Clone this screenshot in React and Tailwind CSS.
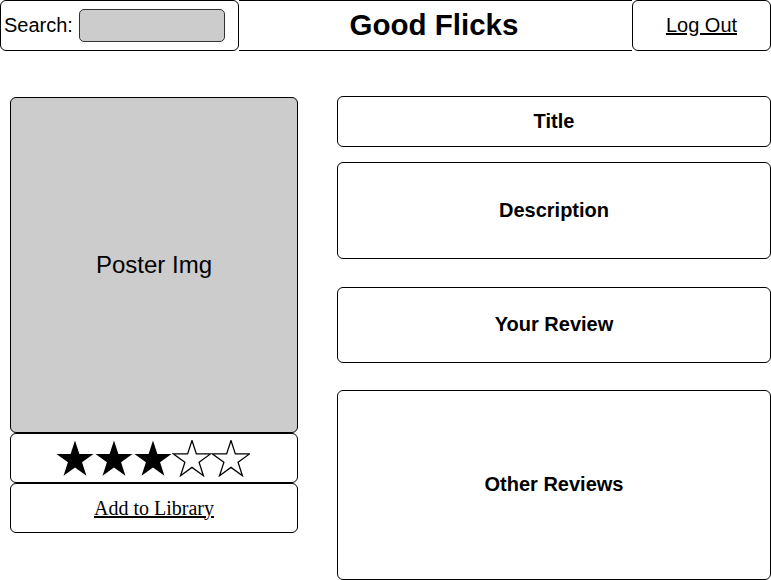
import React from 'react';

const STAR_POINTS =
  '20,0 24.49,13.82 39.02,13.82 27.27,22.36 31.76,36.18 20,27.64 8.24,36.18 12.73,22.36 0.98,13.82 15.51,13.82';

const Star = ({ filled }) => (
  <svg width="39" height="37" viewBox="-0.5 -0.5 40 38">
    <polygon
      points={STAR_POINTS}
      fill={filled ? '#000' : '#fff'}
      stroke="#000"
      strokeWidth={filled ? 0 : 1.3}
      strokeLinejoin="miter"
    />
  </svg>
);

const InfoBox = ({ label, height }) => (
  <div className={`flex items-center justify-center border border-black rounded-[6px] ${height}`}>
    <span className="text-[20px] font-bold -mt-[2px]">{label}</span>
  </div>
);

const App = () => {
  const rating = 3;

  return (
    <div className="w-[771px] h-[580px] bg-white text-black font-['Liberation_Sans',Arial,sans-serif] overflow-hidden">
      {/* Header */}
      <div className="flex h-[51px]">
        <div className="w-[239px] flex items-center pl-[3px] border border-black rounded-[6px]">
          <span className="text-[20px] -mt-px">Search:</span>
          <div className="ml-[6px] w-[146px] h-[33px] bg-[#cccccc] border border-[#333] rounded-[5px]" />
        </div>
        <div className="flex-1 flex items-center justify-center pr-[3px] border-y border-black">
          <h1 className="text-[29.5px] font-bold">Good Flicks</h1>
        </div>
        <div className="w-[139px] flex items-center justify-center border border-black rounded-[6px]">
          <a href="#" className="text-[20px] underline -mt-px">Log Out</a>
        </div>
      </div>

      {/* Body */}
      <div className="flex items-start pt-[46px] pl-[10px] gap-[39px]">
        <div className="w-[288px] flex flex-col">
          <div className="h-[336px] flex items-center justify-center bg-[#cccccc] border border-black rounded-[6px]">
            <span className="text-[24px]">Poster Img</span>
          </div>
          <div className="h-[50px] flex items-center justify-center pr-[3px] border border-black rounded-[6px]">
            {[1, 2, 3, 4, 5].map(n => (
              <Star key={n} filled={n <= rating} />
            ))}
          </div>
          <div className="h-[50px] flex items-center justify-center border border-black rounded-[6px]">
            <a href="#" className="font-['Liberation_Serif','Times_New_Roman',serif] text-[20px] underline -mt-px">
              Add to Library
            </a>
          </div>
        </div>

        <div className="flex-1 flex flex-col -mt-px">
          <InfoBox label="Title" height="h-[51px]" />
          <div className="mt-[15px]">
            <InfoBox label="Description" height="h-[97px]" />
          </div>
          <div className="mt-[28px]">
            <InfoBox label="Your Review" height="h-[76px]" />
          </div>
          <div className="mt-[27px]">
            <InfoBox label="Other Reviews" height="h-[190px]" />
          </div>
        </div>
      </div>
    </div>
  );
};

export default App;
